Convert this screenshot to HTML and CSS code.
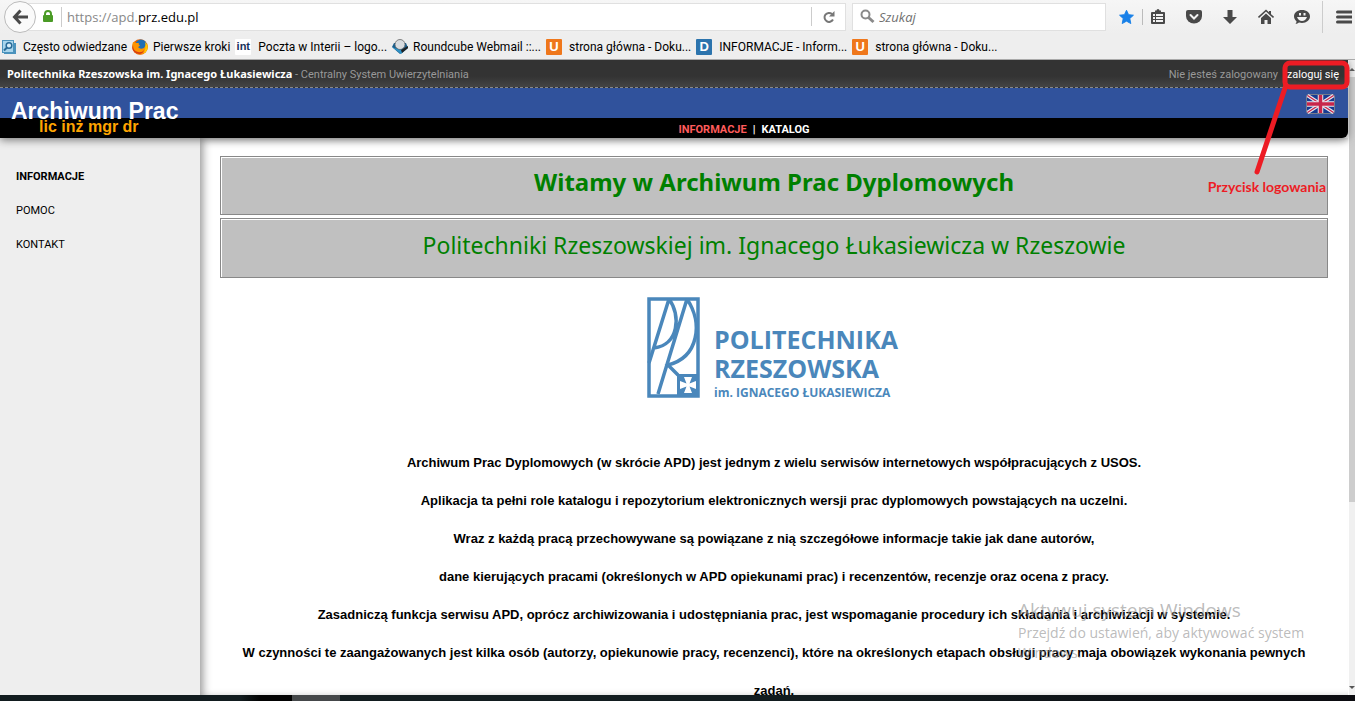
FILE: index.html
```html
<!DOCTYPE html>
<html lang="pl">
<head>
<meta charset="utf-8">
<title>Archiwum Prac Dyplomowych</title>
<link rel="stylesheet" href="styles.css">
</head>
<body>
<div class="chrome">
  <div class="toolbar">
    <button class="back" aria-label="Wstecz"><svg width="16" height="16" viewBox="0 0 16 16" fill="none" stroke="#494949" stroke-width="3"><path d="M8.500 1.500L2.500 8l6 6.500M3 8h13"/></svg></button>
    <div class="address">
      <svg class="lock" width="12" height="13" viewBox="0 0 12 13"><path d="M3 6V4a3 3 0 0 1 6 0v2" fill="none" stroke="#4a9b26" stroke-width="2"/><rect x="1" y="5" width="10" height="7" rx="1" fill="#4a9b26"/></svg>
      <a class="url" href="#">https://apd.<span>prz.edu.pl</span></a>
      <button class="reload" aria-label="Odśwież"><svg width="14" height="14" viewBox="0 0 14 14"><path d="M11 9.500a4.500 4.500 0 1 1-1-5.500" fill="none" stroke="#777" stroke-width="2"/><path d="M12.500 1v5.500H7z" fill="#777"/></svg></button>
    </div>
    <div class="search">
      <svg width="15" height="15" viewBox="0 0 15 15" fill="none" stroke="#8a8a8a"><circle cx="5.500" cy="5.500" r="4" stroke-width="2"/><path d="M8.500 8.500L13.500 13" stroke-width="3"/></svg>
      <input type="text" placeholder="Szukaj" aria-label="Szukaj">
    </div>
    <div class="tools">
      <button class="star" aria-label="Zakładka"><svg width="16" height="16" viewBox="0 0 16 16"><path fill="#1880e8" stroke="#1880e8" stroke-linejoin="round" d="M8 .8l2.200 4.700 5.200.6-3.900 3.500 1.100 5.400L8 12.400 3.400 15l1.100-5.400L.6 6.100l5.200-.6z"/></svg></button>
      <button class="list" aria-label="Lista"><svg width="16" height="16" viewBox="0 0 16 16" fill="#494949"><path d="M5 3V1.500h1.500a1.500 1.500 0 0 1 3 0H11V3h3a1 1 0 0 1 1 1v10a1 1 0 0 1-1 1H2a1 1 0 0 1-1-1V4a1 1 0 0 1 1-1z"/><path fill="#f2f2f2" d="M3 5h2v2H3zM6 5h7v2H6zM3 8h2v2H3zM6 8h7v2H6zM3 11h2v2H3zM6 11h7v2H6z"/></svg></button>
      <button aria-label="Pocket"><svg width="16" height="16" viewBox="0 0 16 16"><path fill="#494949" d="M2 1h12q2 0 2 2v4a8 7.500 0 0 1-16 0V3q0-2 2-2z"/><path d="M4.500 6L8 9.500 11.500 6" fill="none" stroke="#f2f2f2" stroke-width="2" stroke-linecap="round"/></svg></button>
      <button aria-label="Pobrane"><svg width="16" height="16" viewBox="0 0 16 16"><path fill="#494949" d="M5.500 1h5v7H15l-7 7-7-7h4.500z"/></svg></button>
      <button aria-label="Strona startowa"><svg width="16" height="16" viewBox="0 0 16 16"><path fill="none" stroke="#494949" stroke-width="1.600" d="M.5 8.500L8 1.500l7.500 7"/><path fill="#494949" d="M11 2h2v4l-2-2zM8 4.500l5 4.500v6H9.500v-4h-3v4H3V9z"/></svg></button>
      <button aria-label="Hello"><svg width="16" height="16" viewBox="0 0 16 16"><path fill="#494949" d="M8 1c4.500 0 8 2.500 8 6.300S12.500 14 8 14c-1 0-2-.1-3-.4Q3.500 15 1.500 15q1-1 1-2.700C1 11 0 9.300 0 7.300 0 3.500 3.500 1 8 1z"/><path fill="#f2f2f2" d="M5 4h2v2.500H5zM9.500 4h2v2.500h-2zM3 8h10q-1.500 4-5 4T3 8z"/></svg></button>
      <button class="menu" aria-label="Menu"><svg width="16" height="16" viewBox="0 0 16 16"><path stroke="#494949" stroke-width="3" stroke-linecap="round" d="M1.500 3h14M1.500 8h14M1.500 13h14"/></svg></button>
    </div>
  </div>
  <nav class="bookmarks" aria-label="Zakładki">
    <a href="#"><svg width="16" height="16" viewBox="0 0 16 16"><path fill="#4b93bd" d="M0 1h12v3h2v11H2v-1H0z"/><path fill="#a8d5ec" d="M1 2h10v11H1z"/><circle cx="7" cy="6.500" r="2.800" fill="#d8eef9" stroke="#286b98" stroke-width="1.500"/><path d="M5 8.500l-3 3" stroke="#286b98" stroke-width="2"/></svg>Często odwiedzane</a>
    <a href="#"><svg width="16" height="16" viewBox="0 0 16 16"><circle cx="8" cy="8" r="7.800" fill="#e66000"/><circle cx="9" cy="6" r="5.600" fill="#1f6fb5"/><path fill="#ff9500" d="M1 3q2 0 3 1l3 0q-1 2 1 2-1 2-2 2 2 3 6 1l3-5q2 6-2 9.500-5 4-10 0Q-1 9 1 3z"/><path fill="#ffcb00" d="M13 3q3 3 2.500 7-1 3-4 4.500 3-5 1.500-11.500z"/><path fill="#d63c12" d="M1 6q0 6 5 7 4 1 6-2-1 4-5 4Q1 14 .3 9z"/></svg>Pierwsze kroki</a>
    <a href="#"><span class="fav int">int</span>Poczta w Interii – logo...</a>
    <a href="#"><svg width="16" height="16" viewBox="0 0 16 16"><path fill="#185f8e" d="M0 8l8 7 8-6-2-5H2z"/><circle cx="8" cy="5.500" r="5" fill="#d9dcdf" stroke="#666" stroke-width=".8"/><path fill="#2e91c5" d="M0 8l8 3 8-2-7 6z"/><path fill="#222" d="M9 11l7-4v2l-6 5z"/></svg>Roundcube Webmail ::...</a>
    <a href="#"><span class="fav orange">U</span>strona główna - Doku...</a>
    <a href="#"><span class="fav blue">D</span>INFORMACJE - Inform...</a>
    <a href="#"><span class="fav orange">U</span>strona główna - Doku...</a>
  </nav>
</div>
<div class="viewport">
  <div class="page">
    <header class="header">
      <div class="userbar">
        <p><strong>Politechnika Rzeszowska im. Ignacego Łukasiewicza</strong> - Centralny System Uwierzytelniania</p>
        <p class="login">Nie jesteś zalogowany <a href="#">zaloguj się</a></p>
      </div>
      <div class="banner">
        <div class="brand"><span class="brand-name">Archiwum Prac</span><span class="brand-sub">lic inż mgr dr</span></div>
        <a class="flag" href="#" aria-label="English"><svg width="29" height="20" viewBox="0 0 29 20"><rect x=".5" y=".5" width="28" height="19" rx="2" fill="#173b91" stroke="#777b8c"/><path d="M1.500 1.500l26 17M27.500 1.500l-26 17" stroke="#e8e8f0" stroke-width="3.500"/><path d="M1.500 1.500l26 17M27.500 1.500l-26 17" stroke="#c8254a" stroke-width="1.300"/><path d="M14.500 1v18M1 10h27" stroke="#e8e8f0" stroke-width="5.500"/><path d="M14.500 1v18M1 10h27" stroke="#c8254a" stroke-width="3.500"/></svg></a>
      </div>
      <nav class="menubar"><a class="current" href="#">INFORMACJE</a><span>|</span><a href="#">KATALOG</a></nav>
    </header>
    <div class="columns">
      <nav class="sidebar"><a class="current" href="#">INFORMACJE</a><a href="#">POMOC</a><a href="#">KONTAKT</a></nav>
      <main class="main">
        <h1 class="panel">Witamy w Archiwum Prac Dyplomowych</h1>
        <h2 class="panel">Politechniki Rzeszowskiej im. Ignacego Łukasiewicza w Rzeszowie</h2>
        <svg class="logo" width="260" height="104" viewBox="-3 0 260 104" role="img" aria-label="Politechnika Rzeszowska">
          <g fill="none" stroke="#4a87bb" stroke-width="3.500"><rect x="2" y="2" width="49" height="97"/><path d="M22 2L2 66M40 2L11 97M22 2C34 18 32 48 7 51M40 2C56 26 52 60 21 68L31 78"/></g>
          <path fill="#4a87bb" d="M30 77h21v22H30z"/>
          <path fill="#fff" d="M37 80h8l-2.500 6.500L49 84v8l-6.500-2.500L45 96h-8l2.500-6.500L33 92v-8l6.500 2.500z"/>
          <g class="logo-text"><text x="67" y="52" font-size="25">POLITECHNIKA</text><text x="67" y="81" font-size="25">RZESZOWSKA</text><text x="67" y="100" font-size="12">im. IGNACEGO ŁUKASIEWICZA</text></g>
        </svg>
        <div class="intro">
          <p>Archiwum Prac Dyplomowych (w skrócie APD) jest jednym z wielu serwisów internetowych współpracujących z USOS.</p>
          <p>Aplikacja ta pełni role katalogu i repozytorium elektronicznych wersji prac dyplomowych powstających na uczelni.</p>
          <p>Wraz z każdą pracą przechowywane są powiązane z nią szczegółowe informacje takie jak dane autorów,</p>
          <p>dane kierujących pracami (określonych w APD opiekunami prac) i recenzentów, recenzje oraz ocena z pracy.</p>
          <p>Zasadniczą funkcja serwisu APD, oprócz archiwizowania i udostępniania prac, jest wspomaganie procedury ich składania i archiwizacji w systemie.</p>
          <p>W czynności te zaangażowanych jest kilka osób (autorzy, opiekunowie pracy, recenzenci), które na określonych etapach obsługi pracy maja obowiązek wykonania pewnych zadań.</p>
        </div>
      </main>
    </div>
  </div>
  <div class="scrollbar"><span class="up"></span><span class="thumb"></span><span class="down"></span></div>
  <svg class="marker" width="100" height="120" viewBox="0 0 100 120" fill="none" stroke="#ed1c24"><rect x="31" y="5" width="62" height="24" rx="5" stroke-width="5"/><path d="M32 27L3 114" stroke-width="5" stroke-linecap="round"/></svg>
  <p class="marker-label">Przycisk logowania</p>
  <div class="watermark"><p class="wm-title">Aktywuj system Windows</p><p>Przejdź do ustawień, aby aktywować system Windows.</p></div>
</div>
<div class="taskbar"></div>
</body>
</html>
```
FILE: styles.css
```css
* { box-sizing: border-box; }
body { margin: 0; height: 100vh; display: flex; flex-direction: column; overflow: hidden; background: #fff; font-family: "Liberation Sans", Arial, sans-serif; }
p, h1, h2 { margin: 0; }
a { color: inherit; text-decoration: none; }
button { border: 0; padding: 0; background: none; display: flex; align-items: center; justify-content: center; }

.chrome { flex: none; height: 60px; background: linear-gradient(#f6f6f6, #eee 34px); border-bottom: 1px solid #aaa; font-family: Roboto, sans-serif; font-size: 12px; }
.toolbar { display: flex; height: 33px; padding-left: 4px; align-items: center; }
.back { flex: none; z-index: 1; width: 32px; height: 32px; border: 1px solid #bbb; border-radius: 50%; background: #fafafa; }
.address { flex: 1; display: flex; align-items: center; height: 28px; margin: 0 6px 0 -16px; padding-left: 21px; background: #fff; border: 1px solid #e0e0e0; }
.url { flex: 1; margin-left: 7px; padding-left: 5px; border-left: 1px solid #ccc; color: #888; font: 13px/20px "Open Sans", sans-serif; }
.url span { color: #000; }
.reload { width: 34px; height: 19px; border-left: 1px solid #ccc; }
.search { display: flex; align-items: center; gap: 4px; width: 254px; height: 28px; padding-left: 7px; background: #fff; border: 1px solid #e0e0e0; }
.search input { border: 0; width: 200px; padding: 0; font: italic 13px "Open Sans", sans-serif; background: none; }
.search input::placeholder { color: #707070; }
.tools { display: flex; align-items: center; height: 32px; padding: 0 1px 0 13px; }
.tools button { width: 36px; height: 32px; }
.tools .star { width: 24px; height: 16px; margin-right: -3px; padding-right: 8px; border-right: 1px solid #bbb; }
.tools .menu { width: 32px; border-left: 1px solid #ccc; padding-left: 10px; margin-left: 2px; }
.bookmarks { display: flex; height: 28px; padding-left: 2px; align-items: center; gap: 5px; white-space: nowrap; }
.bookmarks a { display: flex; align-items: center; gap: 5px; line-height: 16px; }
.fav { width: 16px; height: 16px; margin-right: 2px; border-radius: 1px; color: #fff; font: bold 13px/16px "Liberation Sans", sans-serif; text-align: center; }
.int { background: #fff; color: #173059; font-size: 11px; line-height: 14px; }
.orange { background: #ef771b; }
.blue { background: #2c74ad; }

.viewport { position: relative; flex: 1; min-height: 0; display: flex; overflow: hidden; }
.page { flex: 1; display: flex; flex-direction: column; }
.header { z-index: 1; flex: none; border-bottom-right-radius: 6px; background: #000; box-shadow: 0 2px 8px #777; }
.userbar { display: flex; justify-content: space-between; height: 28px; padding: 0 9px 0 7px; border-bottom: 1px dashed #888; background: linear-gradient(#333 60%, #444); color: #999; font: 11px/28px Roboto, sans-serif; }
.userbar strong { color: #fff; font-family: "Noto Sans", sans-serif; }
.login { line-height: 30px; }
.userbar a { margin-left: 6px; color: #fff; }
.banner { display: flex; justify-content: space-between; height: 30px; padding: 6px 13px 0 11px; background: #30529c; }
.brand { display: flex; flex-direction: column; color: #fff; font-weight: bold; }
.brand-name { font-size: 23px; line-height: 34px; flex: none; height: 24px; }
.brand-sub { color: #ffa500; font-size: 16px; line-height: 18px; padding-left: 28px; z-index: 1; }
.flag { height: 20px; }
.menubar { display: flex; justify-content: center; gap: 6px; height: 20px; padding-left: 140px; color: #fff; font: bold 11px/24px Roboto, sans-serif; }
.menubar .current { color: #ff5b5b; }
.columns { flex: 1; display: flex; min-height: 0; }
.sidebar { flex: none; display: flex; flex-direction: column; gap: 14px; width: 200px; padding: 29px 16px; background: #eee; font: 11px/20px Roboto, sans-serif; }
.sidebar .current { font-weight: bold; }
.main { flex: 1; padding: 18px 20px 0; text-align: center; box-shadow: inset 6px 0 8px -3px #999; }
.panel { height: 59px; margin-bottom: 3px; border: 1px solid #888; background: silver; box-shadow: inset 1px 1px #fff, 1px 1px #fff; color: green; font-family: "Noto Sans", sans-serif; font-size: 24px; line-height: 50px; }
h2.panel { height: 60px; font-weight: normal; font-size: 23px; line-height: 52px; }
.logo { display: block; margin: 19px auto 43px; }
.logo-text { fill: #4a87bb; font-family: "Open Sans", sans-serif; font-weight: bold; }
.intro { padding: 0 6px; font-size: 13px; font-weight: bold; line-height: 38px; }
.scrollbar { display: flex; flex-direction: column; align-items: center; width: 7px; background: #f0f0f0; border-left: 1px solid #fff; }
.up { margin: 8px 0 6px; border: 3px solid transparent; border-top: 0; border-bottom: 3px solid #555; }
.thumb { width: 100%; height: 67%; background: #cdcdcd; }
.down { margin: auto 0 6px; border: 3px solid transparent; border-bottom: 0; border-top: 3px solid #555; }
.marker { position: absolute; z-index: 2; top: -2px; right: 1px; }
.marker-label { position: absolute; z-index: 2; top: 117px; right: 29px; color: #ed1c24; font: bold 14px/20px Lato, sans-serif; }
.watermark { position: absolute; z-index: 2; right: 37px; bottom: 32px; width: 300px; color: rgba(150, 150, 150, .65); font: 14px/20px "Open Sans", sans-serif; }
.wm-title { font-size: 19px; line-height: 26px; }
.taskbar { flex: none; height: 6px; background: linear-gradient(90deg, #121c1f 240px, #020202 260px 292px, #45484a 292px 340px, #121c1f 340px 60%, #0b0b10); }
```
